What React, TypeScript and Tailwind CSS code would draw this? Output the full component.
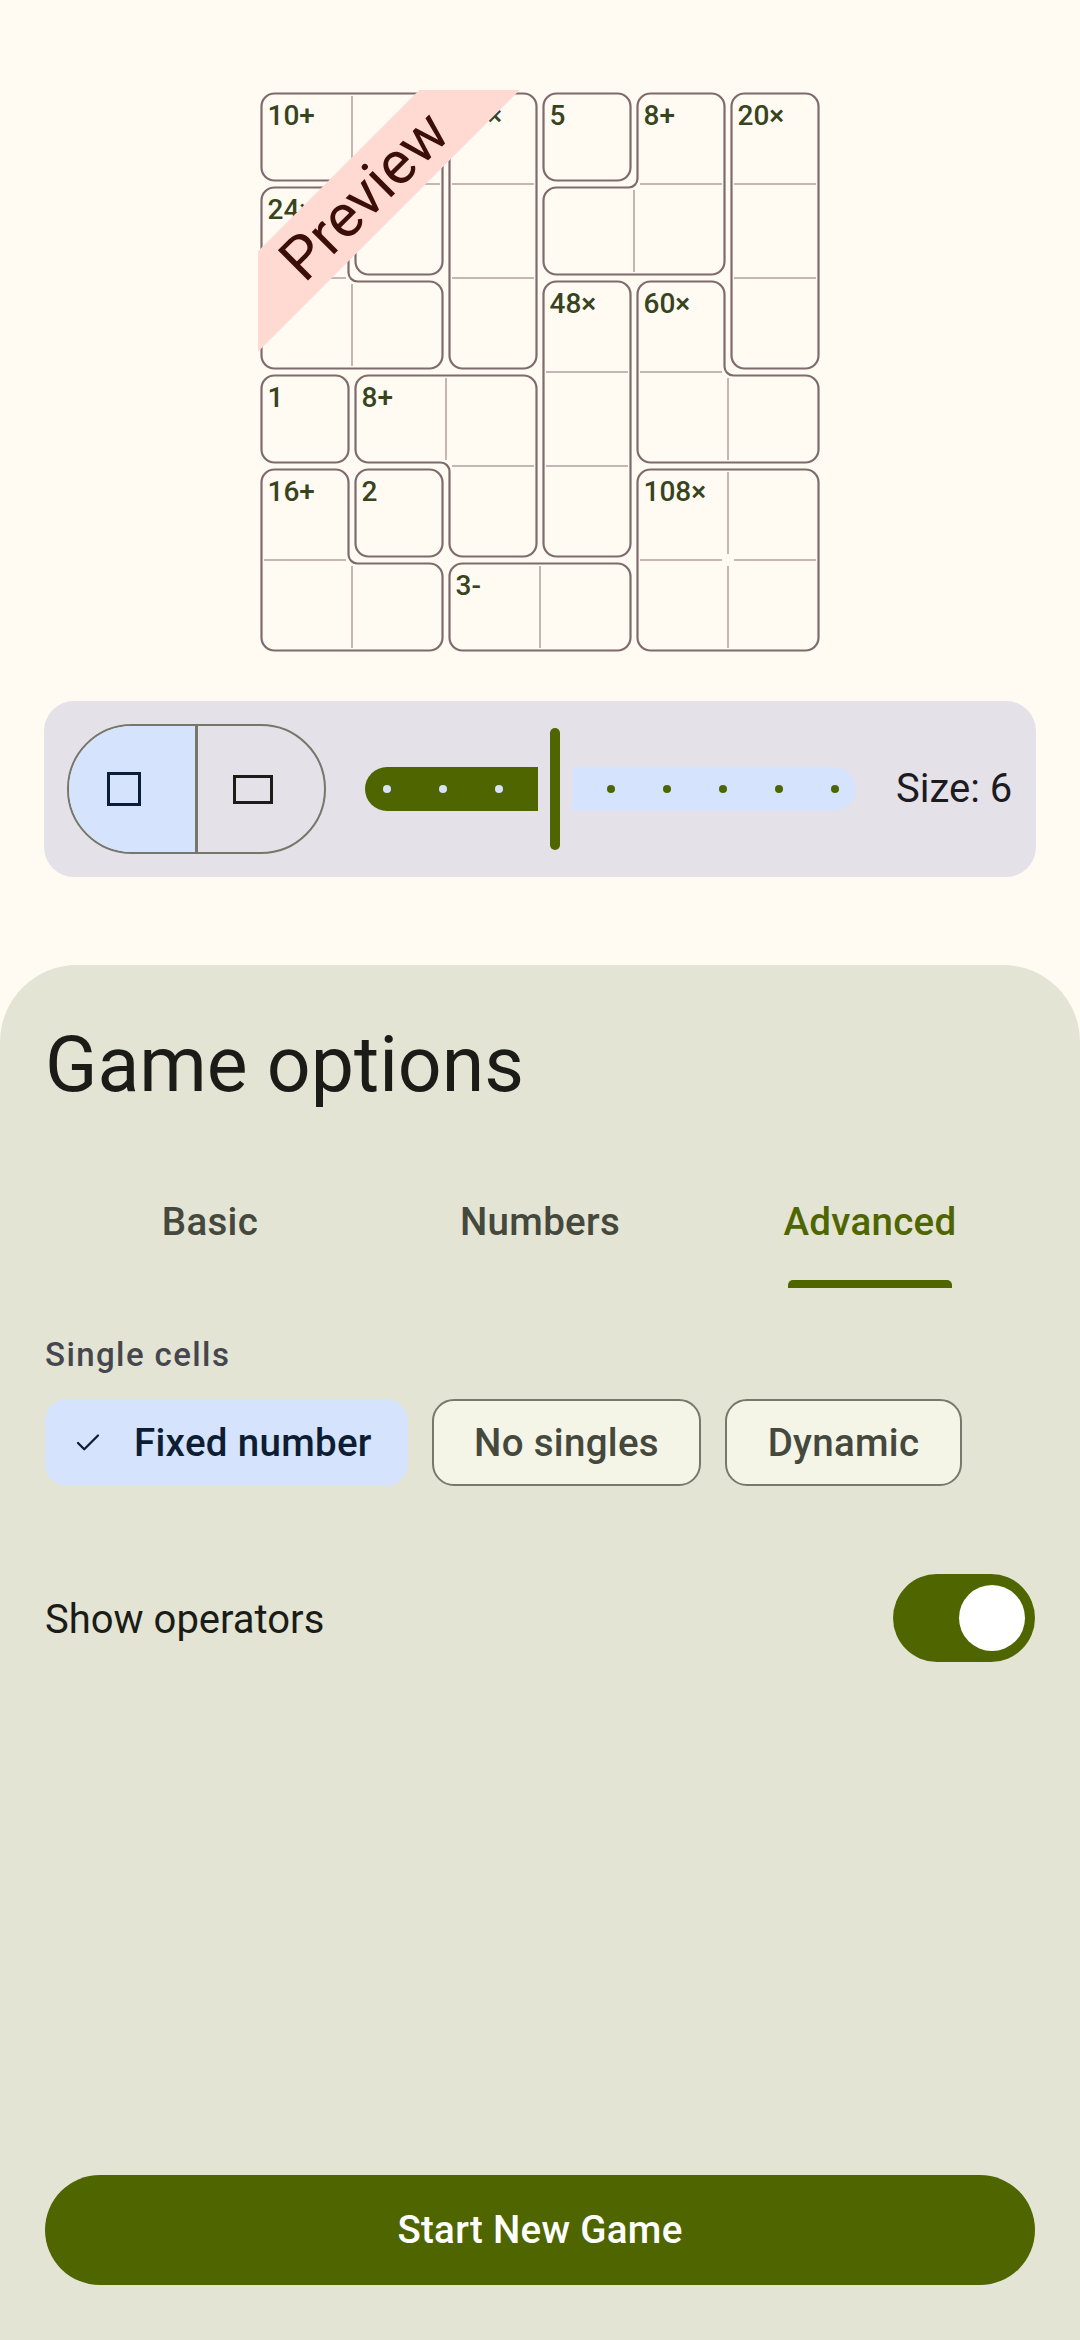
import React from 'react';
import { Check } from 'lucide-react';

/* ─── Puzzle data ─── */
const CELL = 94;
const INSET = 3.5;

type Cell = [number, number];

interface Cage {
  label: string;
  cells: Cell[];
}

const cages: Cage[] = [
  { label: '10+', cells: [[0, 0], [0, 1], [1, 1]] },
  { label: '30×', cells: [[0, 2], [1, 2], [2, 2]] },
  { label: '5', cells: [[0, 3]] },
  { label: '8+', cells: [[0, 4], [1, 3], [1, 4]] },
  { label: '20×', cells: [[0, 5], [1, 5], [2, 5]] },
  { label: '24×', cells: [[1, 0], [2, 0], [2, 1]] },
  { label: '48×', cells: [[2, 3], [3, 3], [4, 3]] },
  { label: '60×', cells: [[2, 4], [3, 4], [3, 5]] },
  { label: '1', cells: [[3, 0]] },
  { label: '8+', cells: [[3, 1], [3, 2], [4, 2]] },
  { label: '16+', cells: [[4, 0], [5, 0], [5, 1]] },
  { label: '2', cells: [[4, 1]] },
  { label: '108×', cells: [[4, 4], [4, 5], [5, 4], [5, 5]] },
  { label: '3-', cells: [[5, 2], [5, 3]] },
];

const key = (r: number, c: number) => `${r},${c}`;

/* Trace the cage border clockwise, shrink it and round every corner */
const cagePath = (cells: Cell[]): string => {
  const set = new Set(cells.map(([r, c]) => key(r, c)));
  const edges = new Map<string, [number, number]>();
  for (const [r, c] of cells) {
    if (!set.has(key(r - 1, c))) edges.set(`${c},${r}`, [c + 1, r]);
    if (!set.has(key(r, c + 1))) edges.set(`${c + 1},${r}`, [c + 1, r + 1]);
    if (!set.has(key(r + 1, c))) edges.set(`${c + 1},${r + 1}`, [c, r + 1]);
    if (!set.has(key(r, c - 1))) edges.set(`${c},${r + 1}`, [c, r]);
  }
  const first = edges.keys().next().value as string;
  const raw: [number, number][] = [];
  let cur = first;
  do {
    const [x, y] = cur.split(',').map(Number);
    raw.push([x, y]);
    const nxt = edges.get(cur)!;
    cur = `${nxt[0]},${nxt[1]}`;
  } while (cur !== first);

  const dir = (a: [number, number], b: [number, number]): [number, number] => [
    Math.sign(b[0] - a[0]),
    Math.sign(b[1] - a[1]),
  ];

  // drop collinear points
  const pts = raw.filter((p, i) => {
    const prev = raw[(i - 1 + raw.length) % raw.length];
    const next = raw[(i + 1) % raw.length];
    const a = dir(prev, p);
    const b = dir(p, next);
    return a[0] !== b[0] || a[1] !== b[1];
  });

  const n = pts.length;
  const offs: { x: number; y: number; convex: boolean }[] = pts.map((p, i) => {
    const prev = pts[(i - 1 + n) % n];
    const next = pts[(i + 1) % n];
    const din = dir(prev, p);
    const dout = dir(p, next);
    const nin = [-din[1], din[0]];
    const nout = [-dout[1], dout[0]];
    return {
      x: p[0] * CELL + INSET * (nin[0] + nout[0]),
      y: p[1] * CELL + INSET * (nin[1] + nout[1]),
      convex: din[0] * dout[1] - din[1] * dout[0] > 0,
    };
  });

  const toward = (a: { x: number; y: number }, b: { x: number; y: number }, r: number) => {
    const dx = b.x - a.x;
    const dy = b.y - a.y;
    const len = Math.hypot(dx, dy);
    return `${a.x + (dx / len) * r} ${a.y + (dy / len) * r}`;
  };

  let d = '';
  offs.forEach((p, i) => {
    const prev = offs[(i - 1 + n) % n];
    const next = offs[(i + 1) % n];
    const r = p.convex ? 13 : 9;
    d += `${i === 0 ? 'M' : 'L'}${toward(p, prev, r)} A${r} ${r} 0 0 ${p.convex ? 1 : 0} ${toward(p, next, r)} `;
  });
  return d + 'Z';
};

const innerLines = (cells: Cell[]) => {
  const set = new Set(cells.map(([r, c]) => key(r, c)));
  const lines: { x1: number; y1: number; x2: number; y2: number }[] = [];
  for (const [r, c] of cells) {
    if (set.has(key(r, c + 1))) {
      const x = (c + 1) * CELL;
      lines.push({ x1: x, y1: r * CELL + 6, x2: x, y2: (r + 1) * CELL - 6 });
    }
    if (set.has(key(r + 1, c))) {
      const y = (r + 1) * CELL;
      lines.push({ x1: c * CELL + 6, y1: y, x2: (c + 1) * CELL - 6, y2: y });
    }
  }
  return lines;
};

const labelCell = (cells: Cell[]): Cell =>
  [...cells].sort((a, b) => a[0] - b[0] || a[1] - b[1])[0];

/* ─── Preview grid ─── */
const PuzzlePreview = () => (
  <div className="relative h-[564px] w-[564px] overflow-hidden">
    <svg width="564" height="564" viewBox="0 0 564 564" className="absolute left-0 top-0">
      {cages.map((cage, i) => (
        <g key={i}>
          {innerLines(cage.cells).map((l, j) => (
            <line key={j} {...l} stroke="#c4b7b3" strokeWidth="2" />
          ))}
          <path d={cagePath(cage.cells)} fill="none" stroke="#7f6a6d" strokeWidth="2.2" />
          <text
            x={labelCell(cage.cells)[1] * CELL + 9.5}
            y={labelCell(cage.cells)[0] * CELL + 34.5}
            fontSize="28"
            fontWeight="500"
            fill="#37441d"
            fontFamily="Roboto, sans-serif"
          >
            {cage.label}
          </text>
        </g>
      ))}
    </svg>
    {/* corner ribbon */}
    <div className="absolute left-[-94.5px] top-[70px] flex h-[71px] w-[400px] -rotate-45 items-center justify-center bg-[#ffdad2]">
      <span className="text-[60px] leading-none text-[#3b0f07]">Preview</span>
    </div>
  </div>
);

/* ─── Size / shape bar ─── */
const SizeBar = () => (
  <div className="mx-[44px] mt-[47px] flex h-[176px] items-center rounded-[30px] bg-[#e5e1e8] px-[23px]">
    <div className="flex h-[130px] w-[259px] overflow-hidden rounded-full border-[2.5px] border-[#74776a]">
      <div className="flex flex-1 items-center justify-center bg-[#d5e3fc] pr-[16px]">
        <div className="h-[34px] w-[34px] border-[3px] border-[#0c1d37]" />
      </div>
      <div className="w-[2.5px] bg-[#74776a]" />
      <div className="flex flex-1 items-center justify-center pr-[16px]">
        <div className="h-[29px] w-[40px] border-[3px] border-[#1c1c18]" />
      </div>
    </div>

    <div className="ml-[39px] flex h-[122px] w-[491px] items-center">
      <div className="flex h-[44px] w-[173px] items-center gap-[48px] rounded-l-full rounded-r-[4px] bg-[#4f6600] pl-[18px]">
        {[0, 1, 2].map((i) => (
          <span key={i} className="h-[8px] w-[8px] rounded-full bg-[#d5e3fc]" />
        ))}
      </div>
      <div className="ml-[12px] h-[122px] w-[10px] rounded-full bg-[#4f6600]" />
      <div className="ml-[12px] flex h-[44px] w-[284px] items-center gap-[48px] rounded-l-[4px] rounded-r-full bg-[#d5e3fc] pl-[35px]">
        {[0, 1, 2, 3, 4].map((i) => (
          <span key={i} className="h-[8px] w-[8px] rounded-full bg-[#4f6600]" />
        ))}
      </div>
    </div>

    <span className="ml-[40px] text-[40px] leading-none text-[#1c1b1f]">Size: 6</span>
  </div>
);

const tabs = ['Basic', 'Numbers', 'Advanced'];

/* ─── Component ─── */
export default function App() {
  return (
    <div className="flex h-[2340px] flex-col bg-[#fffbf3] font-['Roboto',sans-serif]">
      <div className="flex justify-center pt-[90px]">
        <PuzzlePreview />
      </div>

      <SizeBar />

      <div className="mt-[88px] flex flex-1 flex-col rounded-t-[77px] bg-[#e3e4d4] px-[45px] pb-[55px] pt-[62px]">
        <h1 className="text-[77px] leading-[77px] text-[#1b1c17]">Game options</h1>

        {/* ── Tabs ── */}
        <div className="mt-[52px] grid h-[132px] grid-cols-3">
          {tabs.map((tab) => (
            <div key={tab} className="flex justify-center">
              <div
                className={
                  tab === 'Advanced'
                    ? 'relative flex h-full items-center text-[38.5px] font-medium tracking-[0.3px] text-[#4f6600]'
                    : 'relative flex h-full items-center text-[38.5px] font-medium tracking-[0.3px] text-[#45483c]'
                }
              >
                {tab}
                {tab === 'Advanced' && (
                  <span className="absolute bottom-0 left-[5px] right-[5px] h-[8px] rounded-t-[5px] bg-[#4f6600]" />
                )}
              </div>
            </div>
          ))}
        </div>

        <div className="mt-[45px] text-[33px] font-medium leading-[44px] tracking-[1.4px] text-[#46464f]">
          Single cells
        </div>

        {/* ── Chips ── */}
        <div className="mt-[22px] flex gap-[24px]">
          <div className="flex h-[87px] w-[363px] items-center rounded-[22px] bg-[#d5e3fc] pl-[28px]">
            <Check size={30} strokeWidth={1.8} className="text-[#0c1d34]" />
            <span className="ml-[31px] text-[38.5px] font-medium tracking-[0.3px] text-[#0c1d34]">
              Fixed number
            </span>
          </div>
          <div className="flex h-[87px] w-[269px] items-center justify-center rounded-[22px] border-[2.5px] border-[#76786b] bg-[#f4f4e7] text-[38.5px] font-medium tracking-[0.3px] text-[#45483c]">
            No singles
          </div>
          <div className="flex h-[87px] w-[237px] items-center justify-center rounded-[22px] border-[2.5px] border-[#76786b] bg-[#f4f4e7] text-[38.5px] font-medium tracking-[0.3px] text-[#45483c]">
            Dynamic
          </div>
        </div>

        {/* ── Switch row ── */}
        <div className="mt-[88px] flex items-center justify-between">
          <span className="mt-[4px] text-[40px] text-[#1b1c17]">Show operators</span>
          <div className="flex h-[88px] w-[142px] items-center justify-end rounded-full bg-[#4f6600] pr-[10px]">
            <div className="h-[66px] w-[66px] rounded-full bg-white" />
          </div>
        </div>

        <button className="mt-auto flex h-[110px] w-full items-center justify-center rounded-full bg-[#4f6600] text-[38.5px] font-medium tracking-[0.3px] text-white">
          Start New Game
        </button>
      </div>
    </div>
  );
}
